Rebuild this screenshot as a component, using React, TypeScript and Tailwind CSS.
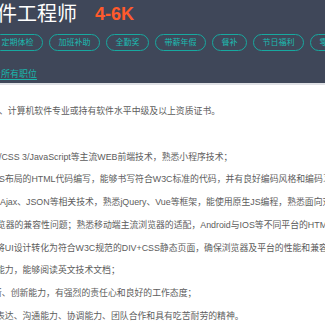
const tags = ["定期体检", "加班补助", "全勤奖", "带薪年假", "餐补", "节日福利", "零食下午茶"];

const lines = [
  { text: "、计算机软件专业或持有软件水平中级及以上资质证书。", cls: "-ml-[1px]" },
  { text: "", cls: "" },
  { text: "/CSS 3/JavaScript等主流WEB前端技术，熟悉小程序技术；", cls: "-ml-[1px]" },
  { text: "S布局的HTML代码编写，能够书写符合W3C标准的代码，并有良好编码风格和编码习惯；", cls: "-ml-[1px]" },
  { text: "Ajax、JSON等相关技术，熟悉jQuery、Vue等框架，能使用原生JS编程，熟悉面向对象；", cls: "" },
  { text: "浏览器的兼容性问题；熟悉移动端主流浏览器的适配，Android与IOS等不同平台的HTML5开发；", cls: "-ml-[12px]" },
  { text: "将UI设计转化为符合W3C规范的DIV+CSS静态页面，确保浏览器及平台的性能和兼容性；", cls: "-ml-[4px]" },
  { text: "能力，能够阅读英文技术文档；", cls: "-ml-[4px]" },
  { text: "新、创新能力，有强烈的责任心和良好的工作态度；", cls: "-ml-[7px]" },
  { text: "表达、沟通能力、协调能力、团队合作和具有吃苦耐劳的精神。", cls: "-ml-[4px]" },
];

export default function App() {
  return (
    <div
      className="w-[325px] h-[325px] overflow-hidden bg-white"
      style={{ fontFamily: '"Liberation Sans", "Noto Sans CJK SC", sans-serif' }}
    >
      <div className="h-[85px] bg-[#3f4759] border-b-2 border-[#dfe1e5] overflow-hidden">
        <div className="flex items-center h-[24px] mt-[2px] -ml-[23px] whitespace-nowrap">
          <span className="text-[20px] leading-[24px] text-white">软件工程师</span>
          <span className="ml-[18px] text-[18px] leading-[24px] font-bold text-[#ff5a2c]">4-6K</span>
        </div>
        <div className="flex gap-[6px] mt-[8px] -ml-[8px] whitespace-nowrap">
          {tags.map((t) => (
            <span
              key={t}
              className="shrink-0 h-[17px] px-[8.5px] rounded-full border border-[#17a9a0] text-[#1bbcb1] text-[8px] leading-[15px]"
            >
              {t}
            </span>
          ))}
        </div>
        <div className="mt-[9px] -ml-[17px] whitespace-nowrap">
          <span className="text-[9px] leading-[14px] text-[#19b5ab] underline underline-offset-2">
            查看所有职位
          </span>
        </div>
      </div>
      <div className="pt-[15px] text-[8.85px] leading-[22.75px] text-[#5c5c5c]">
        {lines.map((l, i) => (
          <div key={i} className={`h-[22.75px] whitespace-nowrap ${l.cls}`}>
            {l.text}
          </div>
        ))}
      </div>
    </div>
  );
}
